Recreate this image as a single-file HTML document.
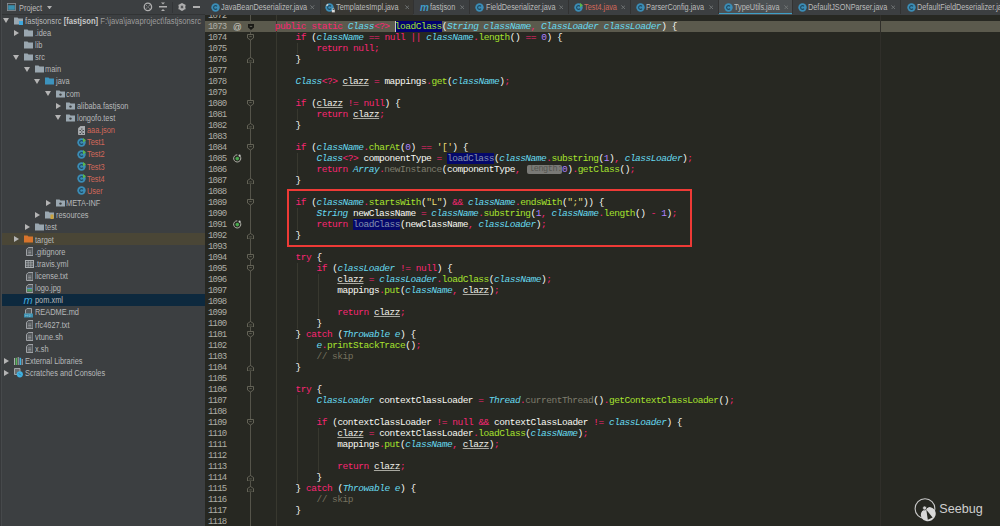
<!DOCTYPE html>
<html><head><meta charset="utf-8">
<style>
*{margin:0;padding:0;box-sizing:content-box}
html,body{width:1000px;height:526px;overflow:hidden;background:#3C3F41}
body{position:relative;font-family:"Liberation Sans",sans-serif}
#panel{position:absolute;left:0;top:0;width:205px;height:526px;background:#3C3F41;overflow:hidden}
#editor{position:absolute;left:205px;top:15px;width:795px;height:511px;background:#272822;overflow:hidden}
#ed{position:absolute;left:-205px;top:-15px;width:1000px;height:526px}
#tabs{position:absolute;left:205px;top:0;width:795px;height:15px;background:#3C3F41;overflow:hidden}
#tb{position:absolute;left:-205px;top:0;width:1000px;height:15px}
.ln{position:absolute;left:208px;height:11px;font:9px/11px "Liberation Mono",monospace;letter-spacing:-0.8px;color:#AEAEA6}
.cl{position:absolute;left:253.8px;height:11px;white-space:pre;font:9.5px/11px "Liberation Mono",monospace;letter-spacing:-0.48px;color:#F8F8F2}
.k,.o{color:#F92672}
.t,.p{color:#66D9EF;font-style:italic}
.m{color:#A6E22E}
.s{color:#7E7C6C}
.w,.b{color:#F8F8F2}
.u{color:#F0F0EA;text-decoration:underline;text-decoration-color:#A8A8A0}
.n{color:#AE81FF}
.str{color:#E6DB74}
.c{color:#75715E}
.hl{color:#A6E22E;background:#02026E}
.hl2{color:#8390AE;background:#05086A}
.hint{display:inline-block;width:35.54px;height:8.6px;line-height:8.6px;background:#6E6E68;color:#9A9A94;border-radius:2px;vertical-align:middle;font-size:8px;overflow:hidden;margin-right:1px}
.tab{position:absolute;top:0.1px;height:15px;font:8.5px/14px "Liberation Sans",sans-serif;transform:scaleX(0.86);transform-origin:0 0;white-space:nowrap}
.tx{position:absolute;top:0;height:15px;font:9px/14px "Liberation Sans",sans-serif;color:#6B6E70}
.tt{position:absolute;height:12px;font:8.5px/12px "Liberation Sans",sans-serif;transform:scaleX(0.87);transform-origin:0 0;white-space:nowrap;color:#B6B8BA}
</style></head><body>
<div id="panel">
<div style="position:absolute;left:0;top:0;width:205px;height:13.5px;background:#3C3F41;border-bottom:1px solid #323435"></div>
<div style="position:absolute;left:0;top:0;width:1px;height:526px;background:#37393B"></div><div style="position:absolute;left:1px;top:0;width:1px;height:526px;background:#46494B"></div>
<svg style="position:absolute;left:7.2px;top:3.3px" width="9" height="8" viewBox="0 0 9 8"><rect x="0.4" y="0.4" width="8.2" height="7.2" fill="none" stroke="#8A9196" stroke-width="0.8"/><rect x="1.2" y="2.2" width="6.6" height="4.6" fill="#3A8FAF"/></svg>
<div style="position:absolute;left:18.5px;top:0.7px;font:8.5px/14px 'Liberation Sans',sans-serif;transform:scaleX(0.87);transform-origin:0 0;color:#BBBBBB">Project</div>
<svg style="position:absolute;left:46.8px;top:5.8px" width="5" height="3.4" viewBox="0 0 5 3.4"><path d="M0 0H5L2.5 3.4Z" fill="#B0B0B0"/></svg>
<svg style="position:absolute;left:142.5px;top:2.2px" width="10" height="10" viewBox="0 0 10 10"><circle cx="4.9" cy="4.9" r="3.7" fill="none" stroke="#AFAFAF" stroke-width="1.3"/><path d="M3.3 3.3L6.5 6.5M6.5 3.3L3.3 6.5" stroke="#AFAFAF" stroke-width="0.9"/><circle cx="4.9" cy="4.9" r="0.9" fill="#3C3F41"/></svg>
<svg style="position:absolute;left:158.5px;top:2px" width="8" height="10" viewBox="0 0 8 10"><path d="M2 0.5H6L4 2.5Z" fill="#AFAFAF"/><rect x="0" y="4" width="8" height="1.5" fill="#AFAFAF"/><path d="M2 9H6L4 7Z" fill="#AFAFAF"/></svg>
<div style="position:absolute;left:171.5px;top:1.5px;width:1px;height:11px;background:#333537"></div>
<svg style="position:absolute;left:177.5px;top:3px" width="8" height="8" viewBox="0 0 8 8"><circle cx="4" cy="4" r="2.6" fill="none" stroke="#AFAFAF" stroke-width="1.6"/><path d="M4 0V8M0.5 2L7.5 6M0.5 6L7.5 2" stroke="#AFAFAF" stroke-width="1.1"/><circle cx="4" cy="4" r="1.1" fill="#3C3F41"/></svg>
<div style="position:absolute;left:193px;top:6.3px;width:7px;height:1.3px;background:#AFAFAF"></div>
<div style="position:absolute;left:2px;top:233.30px;width:203px;height:12.16px;background:#4A4636"></div>
<div style="position:absolute;left:2px;top:294.10px;width:203px;height:12.16px;background:#0D293E"></div>
<svg style="position:absolute;left:3.0px;top:18.0px" width="6" height="5" viewBox="0 0 6 5"><path d="M0 0H6L3 5Z" fill="#B4B4B4"/></svg>
<svg style="position:absolute;left:14.0px;top:16.5px" width="9" height="8" viewBox="0 0 9 8"><path d="M0 0.5H3.5L4.5 1.5H9V7.5H0Z" fill="#9AA7B0"/><rect x="5" y="4" width="4" height="4" fill="#3FA7DC"/></svg>
<div class="tt" style="left:24.6px;top:14.6px;transform:scaleX(0.9)">fastjsonsrc <b style="color:#C8C8C8">[fastjson]</b> <span style="color:#9C9C9C">F:\java\javaproject\fastjsonsrc</span></div>
<svg style="position:absolute;left:14.4px;top:29.7px" width="5" height="6" viewBox="0 0 5 6"><path d="M0 0L5 3L0 6Z" fill="#B4B4B4"/></svg>
<svg style="position:absolute;left:24.4px;top:28.7px" width="9" height="8" viewBox="0 0 9 8"><path d="M0 0.5H3.5L4.5 1.5H9V7.5H0Z" fill="#9AA7B0"/></svg>
<div class="tt" style="left:35.0px;top:26.8px;color:#B6B8BA">.idea</div>
<svg style="position:absolute;left:24.4px;top:40.8px" width="9" height="8" viewBox="0 0 9 8"><path d="M0 0.5H3.5L4.5 1.5H9V7.5H0Z" fill="#9AA7B0"/></svg>
<div class="tt" style="left:35.0px;top:38.9px;color:#B6B8BA">lib</div>
<svg style="position:absolute;left:13.4px;top:54.5px" width="6" height="5" viewBox="0 0 6 5"><path d="M0 0H6L3 5Z" fill="#B4B4B4"/></svg>
<svg style="position:absolute;left:24.4px;top:53.0px" width="9" height="8" viewBox="0 0 9 8"><path d="M0 0.5H3.5L4.5 1.5H9V7.5H0Z" fill="#9AA7B0"/></svg>
<div class="tt" style="left:35.0px;top:51.1px;color:#B6B8BA">src</div>
<svg style="position:absolute;left:23.8px;top:66.6px" width="6" height="5" viewBox="0 0 6 5"><path d="M0 0H6L3 5Z" fill="#B4B4B4"/></svg>
<svg style="position:absolute;left:34.8px;top:65.1px" width="9" height="8" viewBox="0 0 9 8"><path d="M0 0.5H3.5L4.5 1.5H9V7.5H0Z" fill="#9AA7B0"/></svg>
<div class="tt" style="left:45.4px;top:63.2px;color:#B6B8BA">main</div>
<svg style="position:absolute;left:34.2px;top:78.8px" width="6" height="5" viewBox="0 0 6 5"><path d="M0 0H6L3 5Z" fill="#B4B4B4"/></svg>
<svg style="position:absolute;left:45.2px;top:77.3px" width="9" height="8" viewBox="0 0 9 8"><path d="M0 0.5H3.5L4.5 1.5H9V7.5H0Z" fill="#3D93BD"/></svg>
<div class="tt" style="left:55.8px;top:75.4px;color:#B6B8BA">java</div>
<svg style="position:absolute;left:44.6px;top:91.0px" width="6" height="5" viewBox="0 0 6 5"><path d="M0 0H6L3 5Z" fill="#B4B4B4"/></svg>
<svg style="position:absolute;left:55.6px;top:89.5px" width="9" height="8" viewBox="0 0 9 8"><path d="M0 0.5H3.5L4.5 1.5H9V7.5H0Z" fill="#9AA7B0"/><circle cx="4.5" cy="4.6" r="1.2" fill="#3C3F41"/></svg>
<div class="tt" style="left:66.2px;top:87.6px;color:#B6B8BA">com</div>
<svg style="position:absolute;left:56.0px;top:102.6px" width="5" height="6" viewBox="0 0 5 6"><path d="M0 0L5 3L0 6Z" fill="#B4B4B4"/></svg>
<svg style="position:absolute;left:66.0px;top:101.6px" width="9" height="8" viewBox="0 0 9 8"><path d="M0 0.5H3.5L4.5 1.5H9V7.5H0Z" fill="#9AA7B0"/><circle cx="4.5" cy="4.6" r="1.2" fill="#3C3F41"/></svg>
<div class="tt" style="left:76.6px;top:99.7px;color:#B6B8BA">alibaba.fastjson</div>
<svg style="position:absolute;left:55.0px;top:115.3px" width="6" height="5" viewBox="0 0 6 5"><path d="M0 0H6L3 5Z" fill="#B4B4B4"/></svg>
<svg style="position:absolute;left:66.0px;top:113.8px" width="9" height="8" viewBox="0 0 9 8"><path d="M0 0.5H3.5L4.5 1.5H9V7.5H0Z" fill="#9AA7B0"/><circle cx="4.5" cy="4.6" r="1.2" fill="#3C3F41"/></svg>
<div class="tt" style="left:76.6px;top:111.9px;color:#B6B8BA">longofo.test</div>
<svg style="position:absolute;left:77.6px;top:125.5px" width="7.5" height="9" viewBox="0 0 7.5 9"><path d="M2.3 0.5H7V8.5H0.5V2.3Z" fill="#A9ADB0" stroke="#A9ADB0" stroke-width="0.9"/><path d="M1.5 4.5H3M4.5 4.5H6M3 6H4.5M1.5 7.5H3M4.5 7.5H6M3 3H4.5" stroke="#4A4D4F" stroke-width="1.2"/></svg>
<div class="tt" style="left:87.0px;top:124.0px;color:#D1675A">aaa.json</div>
<svg style="position:absolute;left:76.9px;top:137.6px" width="9" height="9" viewBox="0 0 9 9"><circle cx="4.5" cy="4.5" r="4.2" fill="#3B8DB6"/><path d="M6 3.3A1.9 1.9 0 1 0 6 5.7" fill="none" stroke="#1F4A62" stroke-width="1.1"/><path d="M6 0L9 2.2L6 4.4Z" fill="#59B84A"/></svg>
<div class="tt" style="left:87.0px;top:136.2px;color:#D1675A">Test1</div>
<svg style="position:absolute;left:76.9px;top:149.76px" width="9" height="9" viewBox="0 0 9 9"><circle cx="4.5" cy="4.5" r="4.2" fill="#3B8DB6"/><path d="M6 3.3A1.9 1.9 0 1 0 6 5.7" fill="none" stroke="#1F4A62" stroke-width="1.1"/><path d="M6 0L9 2.2L6 4.4Z" fill="#59B84A"/></svg>
<div class="tt" style="left:87.0px;top:148.4px;color:#D1675A">Test2</div>
<svg style="position:absolute;left:76.9px;top:161.92000000000002px" width="9" height="9" viewBox="0 0 9 9"><circle cx="4.5" cy="4.5" r="4.2" fill="#3B8DB6"/><path d="M6 3.3A1.9 1.9 0 1 0 6 5.7" fill="none" stroke="#1F4A62" stroke-width="1.1"/><path d="M6 0L9 2.2L6 4.4Z" fill="#59B84A"/></svg>
<div class="tt" style="left:87.0px;top:160.5px;color:#D1675A">Test3</div>
<svg style="position:absolute;left:76.9px;top:174.08px" width="9" height="9" viewBox="0 0 9 9"><circle cx="4.5" cy="4.5" r="4.2" fill="#3B8DB6"/><path d="M6 3.3A1.9 1.9 0 1 0 6 5.7" fill="none" stroke="#1F4A62" stroke-width="1.1"/><path d="M6 0L9 2.2L6 4.4Z" fill="#59B84A"/></svg>
<div class="tt" style="left:87.0px;top:172.7px;color:#D1675A">Test4</div>
<svg style="position:absolute;left:76.9px;top:186.24px" width="9" height="9" viewBox="0 0 9 9"><circle cx="4.5" cy="4.5" r="4.2" fill="#3B8DB6"/><path d="M6 3.3A1.9 1.9 0 1 0 6 5.7" fill="none" stroke="#1F4A62" stroke-width="1.1"/></svg>
<div class="tt" style="left:87.0px;top:184.8px;color:#D1675A">User</div>
<svg style="position:absolute;left:45.6px;top:199.9px" width="5" height="6" viewBox="0 0 5 6"><path d="M0 0L5 3L0 6Z" fill="#B4B4B4"/></svg>
<svg style="position:absolute;left:55.6px;top:198.9px" width="9" height="8" viewBox="0 0 9 8"><path d="M0 0.5H3.5L4.5 1.5H9V7.5H0Z" fill="#9AA7B0"/><circle cx="4.5" cy="4.6" r="1.2" fill="#3C3F41"/></svg>
<div class="tt" style="left:66.2px;top:197.0px;color:#B6B8BA">META-INF</div>
<svg style="position:absolute;left:35.2px;top:212.1px" width="5" height="6" viewBox="0 0 5 6"><path d="M0 0L5 3L0 6Z" fill="#B4B4B4"/></svg>
<svg style="position:absolute;left:45.2px;top:211.1px" width="9" height="8" viewBox="0 0 9 8"><path d="M0 0.5H3.5L4.5 1.5H9V7.5H0Z" fill="#9AA7B0"/><rect x="5.5" y="3.5" width="3" height="4.5" fill="#C9A23A"/></svg>
<div class="tt" style="left:55.8px;top:209.2px;color:#B6B8BA">resources</div>
<svg style="position:absolute;left:24.8px;top:224.2px" width="5" height="6" viewBox="0 0 5 6"><path d="M0 0L5 3L0 6Z" fill="#B4B4B4"/></svg>
<svg style="position:absolute;left:34.8px;top:223.2px" width="9" height="8" viewBox="0 0 9 8"><path d="M0 0.5H3.5L4.5 1.5H9V7.5H0Z" fill="#9AA7B0"/></svg>
<div class="tt" style="left:45.4px;top:221.3px;color:#B6B8BA">test</div>
<svg style="position:absolute;left:14.4px;top:236.4px" width="5" height="6" viewBox="0 0 5 6"><path d="M0 0L5 3L0 6Z" fill="#B4B4B4"/></svg>
<svg style="position:absolute;left:24.4px;top:235.4px" width="9" height="8" viewBox="0 0 9 8"><path d="M0 0.5H3.5L4.5 1.5H9V7.5H0Z" fill="#D7742C"/></svg>
<div class="tt" style="left:35.0px;top:233.5px;color:#B6B8BA">target</div>
<svg style="position:absolute;left:25.6px;top:247.1px" width="7.5" height="9" viewBox="0 0 7.5 9"><path d="M2.3 0.5H7V8.5H0.5V2.3Z" fill="#55595C" stroke="#A9ADB0" stroke-width="0.9"/><path d="M2.2 4H5.2M2.2 5.5H5.2M2.2 7H5.2" stroke="#A9ADB0" stroke-width="0.6"/></svg>
<div class="tt" style="left:35.0px;top:245.6px;color:#B6B8BA">.gitignore</div>
<svg style="position:absolute;left:24.6px;top:259.9px" width="9" height="8" viewBox="0 0 9 8"><rect x="0.5" y="0.5" width="8" height="7" fill="#55595C" stroke="#A9ADB0"/><path d="M0 2.8H9M0 5.2H9M3.2 0V8M5.8 0V8" stroke="#A9ADB0" stroke-width="0.7"/></svg>
<div class="tt" style="left:35.0px;top:257.8px;color:#B6B8BA">.travis.yml</div>
<svg style="position:absolute;left:25.6px;top:271.5px" width="7.5" height="9" viewBox="0 0 7.5 9"><path d="M2.3 0.5H7V8.5H0.5V2.3Z" fill="#55595C" stroke="#A9ADB0" stroke-width="0.9"/><path d="M2.2 4H5.2M2.2 5.5H5.2M2.2 7H5.2" stroke="#A9ADB0" stroke-width="0.6"/></svg>
<div class="tt" style="left:35.0px;top:270.0px;color:#B6B8BA">license.txt</div>
<svg style="position:absolute;left:25.6px;top:283.6px" width="7.5" height="9" viewBox="0 0 7.5 9"><path d="M2.3 0.5H7V8.5H0.5V2.3Z" fill="#55595C" stroke="#A9ADB0" stroke-width="0.9"/><rect x="1.2" y="4.5" width="4.8" height="3" fill="#4E9A5E"/><rect x="1.2" y="3.8" width="4.8" height="1.2" fill="#5A8FC0"/></svg>
<div class="tt" style="left:35.0px;top:282.1px;color:#B6B8BA">logo.jpg</div>
<div style="position:absolute;left:23.4px;top:294.2px;font:italic 11px/12px 'Liberation Sans',sans-serif;color:#3FA7DC;letter-spacing:-0.5px">m</div>
<div class="tt" style="left:35.0px;top:294.3px;color:#B6B8BA">pom.xml</div>
<svg style="position:absolute;left:24.4px;top:307.5px" width="9" height="10" viewBox="0 0 9 10"><path d="M3 0.5H7.5V6H1.5V2Z" fill="#55595C" stroke="#A9ADB0" stroke-width="0.9"/><rect x="0" y="5.5" width="9" height="4" fill="#3A8FAF"/><path d="M1.5 8.5V6.8L2.5 7.8L3.5 6.8V8.5M5 6.8H6.2L7 7.6L6.2 8.5H5Z" stroke="#8FC5DA" stroke-width="0.5" fill="none"/></svg>
<div class="tt" style="left:35.0px;top:306.4px;color:#B6B8BA">README.md</div>
<svg style="position:absolute;left:25.6px;top:320.1px" width="7.5" height="9" viewBox="0 0 7.5 9"><path d="M2.3 0.5H7V8.5H0.5V2.3Z" fill="#55595C" stroke="#A9ADB0" stroke-width="0.9"/><path d="M2.2 4H5.2M2.2 5.5H5.2M2.2 7H5.2" stroke="#A9ADB0" stroke-width="0.6"/></svg>
<div class="tt" style="left:35.0px;top:318.6px;color:#B6B8BA">rfc4627.txt</div>
<svg style="position:absolute;left:25.6px;top:332.3px" width="7.5" height="9" viewBox="0 0 7.5 9"><path d="M2.3 0.5H7V8.5H0.5V2.3Z" fill="#55595C" stroke="#A9ADB0" stroke-width="0.9"/><path d="M2.2 4H5.2M2.2 5.5H5.2M2.2 7H5.2" stroke="#A9ADB0" stroke-width="0.6"/></svg>
<div class="tt" style="left:35.0px;top:330.8px;color:#B6B8BA">vtune.sh</div>
<svg style="position:absolute;left:25.6px;top:344.4px" width="7.5" height="9" viewBox="0 0 7.5 9"><path d="M2.3 0.5H7V8.5H0.5V2.3Z" fill="#55595C" stroke="#A9ADB0" stroke-width="0.9"/><path d="M2.2 4H5.2M2.2 5.5H5.2M2.2 7H5.2" stroke="#A9ADB0" stroke-width="0.6"/></svg>
<div class="tt" style="left:35.0px;top:342.9px;color:#B6B8BA">x.sh</div>
<svg style="position:absolute;left:4.0px;top:358.0px" width="5" height="6" viewBox="0 0 5 6"><path d="M0 0L5 3L0 6Z" fill="#B4B4B4"/></svg>
<svg style="position:absolute;left:14.0px;top:356.8px" width="9" height="8" viewBox="0 0 9 8"><rect x="0" y="1" width="1" height="7" fill="#A9ADB0"/><rect x="1.6" y="0.8" width="1.5" height="7.2" fill="#5AB45A"/><rect x="3.6" y="0" width="1.5" height="8" fill="#8A8E90"/><rect x="5.6" y="0.8" width="1.5" height="7.2" fill="#3FB0E0"/><rect x="7.7" y="2" width="1" height="6" fill="#A9ADB0"/></svg>
<div class="tt" style="left:24.6px;top:355.1px;color:#B6B8BA">External Libraries</div>
<svg style="position:absolute;left:4.0px;top:370.1px" width="5" height="6" viewBox="0 0 5 6"><path d="M0 0L5 3L0 6Z" fill="#B4B4B4"/></svg>
<svg style="position:absolute;left:14.0px;top:368.4px" width="10" height="10" viewBox="0 0 10 10"><path d="M0.5 0.5H6V6.5H0.5Z" fill="#6A6E70" stroke="#A9ADB0" stroke-width="0.9"/><circle cx="5.8" cy="6.3" r="3.1" fill="#3FB0E0"/><path d="M4.8 5.3L6.8 7.3" stroke="#24648A" stroke-width="0.8"/></svg>
<div class="tt" style="left:24.6px;top:367.2px;color:#B6B8BA">Scratches and Consoles</div>
</div>
<div id="tabs"><div id="tb">
<div style="position:absolute;left:320.5px;top:0;width:92.5px;height:14.5px;background:#393834"></div>
<div style="position:absolute;left:718px;top:0;width:74px;height:14.5px;background:#4C5052"></div>
<div style="position:absolute;left:718px;top:12.6px;width:74px;height:1.9px;background:#3E9FC6"></div>
<svg style="position:absolute;left:210.5px;top:3px" width="9" height="9" viewBox="0 0 9 9"><circle cx="4.5" cy="4.5" r="4.2" fill="#3B8DB6"/><path d="M6 3.3A1.9 1.9 0 1 0 6 5.7" fill="none" stroke="#1F4A62" stroke-width="1.1"/></svg>
<div class="tab" style="left:221px;color:#BBBBBB">JavaBeanDeserializer.java</div>
<svg style="position:absolute;left:310.4px;top:4.8px" width="4.6" height="4.6" viewBox="0 0 4.6 4.6"><path d="M0.3 0.3L4.3 4.3M4.3 0.3L0.3 4.3" stroke="#75787A" stroke-width="0.85"/></svg>
<div style="position:absolute;left:320px;top:0;width:1px;height:14px;background:#323232"></div>
<svg style="position:absolute;left:325px;top:3px" width="9" height="9" viewBox="0 0 9 9"><circle cx="4.5" cy="4.5" r="4.2" fill="#3B8DB6"/><path d="M6 3.3A1.9 1.9 0 1 0 6 5.7" fill="none" stroke="#1F4A62" stroke-width="1.1"/></svg>
<svg style="position:absolute;left:324.5px;top:2.5px" width="11" height="10" viewBox="0 0 11 10"><path d="M1 2.2L2.6 0.8L3.6 1.8L2 3.3Z" fill="#D0D0D0"/><rect x="6.8" y="7" width="3" height="2.4" fill="#D8D8D8"/><path d="M7.4 7V6.2A0.9 0.9 0 0 1 9.2 6.2V7" fill="none" stroke="#D8D8D8" stroke-width="0.6"/></svg>
<div class="tab" style="left:336px;color:#BBBBBB">TemplatesImpl.java</div>
<svg style="position:absolute;left:404.7px;top:4.8px" width="4.6" height="4.6" viewBox="0 0 4.6 4.6"><path d="M0.3 0.3L4.3 4.3M4.3 0.3L0.3 4.3" stroke="#75787A" stroke-width="0.85"/></svg>
<div style="position:absolute;left:413px;top:0;width:1px;height:14px;background:#323232"></div>
<div style="position:absolute;left:420px;top:0px;font:italic bold 10px/15px 'Liberation Sans',sans-serif;color:#3F9CC9">m</div>
<div class="tab" style="left:430px;color:#BBBBBB">fastjson</div>
<svg style="position:absolute;left:459.7px;top:4.8px" width="4.6" height="4.6" viewBox="0 0 4.6 4.6"><path d="M0.3 0.3L4.3 4.3M4.3 0.3L0.3 4.3" stroke="#75787A" stroke-width="0.85"/></svg>
<div style="position:absolute;left:469px;top:0;width:1px;height:14px;background:#323232"></div>
<svg style="position:absolute;left:475px;top:3px" width="9" height="9" viewBox="0 0 9 9"><circle cx="4.5" cy="4.5" r="4.2" fill="#3B8DB6"/><path d="M6 3.3A1.9 1.9 0 1 0 6 5.7" fill="none" stroke="#1F4A62" stroke-width="1.1"/></svg>
<div class="tab" style="left:486px;color:#BBBBBB">FieldDeserializer.java</div>
<svg style="position:absolute;left:558.7px;top:4.8px" width="4.6" height="4.6" viewBox="0 0 4.6 4.6"><path d="M0.3 0.3L4.3 4.3M4.3 0.3L0.3 4.3" stroke="#75787A" stroke-width="0.85"/></svg>
<div style="position:absolute;left:568px;top:0;width:1px;height:14px;background:#323232"></div>
<svg style="position:absolute;left:574px;top:3px" width="9" height="9" viewBox="0 0 9 9"><circle cx="4.5" cy="4.5" r="4.2" fill="#3B8DB6"/><path d="M6 3.3A1.9 1.9 0 1 0 6 5.7" fill="none" stroke="#1F4A62" stroke-width="1.1"/><path d="M6 0L9 2.2L6 4.4Z" fill="#59B84A"/></svg>
<div class="tab" style="left:584px;color:#D1675A">Test4.java</div>
<svg style="position:absolute;left:620.7px;top:4.8px" width="4.6" height="4.6" viewBox="0 0 4.6 4.6"><path d="M0.3 0.3L4.3 4.3M4.3 0.3L0.3 4.3" stroke="#75787A" stroke-width="0.85"/></svg>
<div style="position:absolute;left:630px;top:0;width:1px;height:14px;background:#323232"></div>
<svg style="position:absolute;left:636px;top:3px" width="9" height="9" viewBox="0 0 9 9"><circle cx="4.5" cy="4.5" r="4.2" fill="#3B8DB6"/><path d="M6 3.3A1.9 1.9 0 1 0 6 5.7" fill="none" stroke="#1F4A62" stroke-width="1.1"/></svg>
<div class="tab" style="left:646px;color:#BBBBBB">ParserConfig.java</div>
<svg style="position:absolute;left:708.7px;top:4.8px" width="4.6" height="4.6" viewBox="0 0 4.6 4.6"><path d="M0.3 0.3L4.3 4.3M4.3 0.3L0.3 4.3" stroke="#75787A" stroke-width="0.85"/></svg>
<div style="position:absolute;left:717.6px;top:0;width:1px;height:14px;background:#323232"></div>
<svg style="position:absolute;left:724px;top:3px" width="9" height="9" viewBox="0 0 9 9"><circle cx="4.5" cy="4.5" r="4.2" fill="#3B8DB6"/><path d="M6 3.3A1.9 1.9 0 1 0 6 5.7" fill="none" stroke="#1F4A62" stroke-width="1.1"/></svg>
<div class="tab" style="left:734px;color:#BBBBBB">TypeUtils.java</div>
<svg style="position:absolute;left:783.7px;top:4.8px" width="4.6" height="4.6" viewBox="0 0 4.6 4.6"><path d="M0.3 0.3L4.3 4.3M4.3 0.3L0.3 4.3" stroke="#75787A" stroke-width="0.85"/></svg>
<div style="position:absolute;left:792px;top:0;width:1px;height:14px;background:#323232"></div>
<svg style="position:absolute;left:798px;top:3px" width="9" height="9" viewBox="0 0 9 9"><circle cx="4.5" cy="4.5" r="4.2" fill="#3B8DB6"/><path d="M6 3.3A1.9 1.9 0 1 0 6 5.7" fill="none" stroke="#1F4A62" stroke-width="1.1"/></svg>
<div class="tab" style="left:808px;color:#BBBBBB">DefaultJSONParser.java</div>
<svg style="position:absolute;left:890.7px;top:4.8px" width="4.6" height="4.6" viewBox="0 0 4.6 4.6"><path d="M0.3 0.3L4.3 4.3M4.3 0.3L0.3 4.3" stroke="#75787A" stroke-width="0.85"/></svg>
<div style="position:absolute;left:900px;top:0;width:1px;height:14px;background:#323232"></div>
<svg style="position:absolute;left:906.6px;top:3px" width="9" height="9" viewBox="0 0 9 9"><circle cx="4.5" cy="4.5" r="4.2" fill="#3B8DB6"/><path d="M6 3.3A1.9 1.9 0 1 0 6 5.7" fill="none" stroke="#1F4A62" stroke-width="1.1"/></svg>
<div class="tab" style="left:917px;color:#BBBBBB">DefaultFieldDeserializer.java</div>
</div></div>
<div id="editor"><div id="ed">
<div style="position:absolute;left:205px;top:21.0px;width:795px;height:11.0px;background:#5B5A4D"></div>
<div style="position:absolute;left:276.2px;top:10.0px;width:1px;height:517.0px;background:#38382F"></div>
<div style="position:absolute;left:297.1px;top:43.0px;width:1px;height:11.0px;background:#38382F"></div>
<div style="position:absolute;left:297.1px;top:109.0px;width:1px;height:11.0px;background:#38382F"></div>
<div style="position:absolute;left:297.1px;top:153.0px;width:1px;height:22.0px;background:#38382F"></div>
<div style="position:absolute;left:297.1px;top:208.0px;width:1px;height:22.0px;background:#38382F"></div>
<div style="position:absolute;left:297.1px;top:263.0px;width:1px;height:66.0px;background:#38382F"></div>
<div style="position:absolute;left:317.9px;top:274.0px;width:1px;height:44.0px;background:#38382F"></div>
<div style="position:absolute;left:297.1px;top:340.0px;width:1px;height:22.0px;background:#38382F"></div>
<div style="position:absolute;left:297.1px;top:395.0px;width:1px;height:88.0px;background:#38382F"></div>
<div style="position:absolute;left:317.9px;top:428.0px;width:1px;height:44.0px;background:#38382F"></div>
<div style="position:absolute;left:880px;top:15px;width:1px;height:511px;background:#302F2A"></div>
<div style="position:absolute;left:250px;top:15px;width:1px;height:511px;background:#55544A"></div>
<div class="ln" style="top:11.0px">1072</div>
<div class="ln" style="top:22.0px">1073</div>
<div class="cl" style="top:20.7px">    <span class="k">public</span><span class="k"> static </span><span class="t">Class</span><span class="o">&lt;?&gt;</span><span class="w"> </span><span class="hl">loadClass</span><span class="b">(</span><span class="t">String</span><span class="w"> </span><span class="p">className</span><span class="o">,</span><span class="w"> </span><span class="t">ClassLoader</span><span class="w"> </span><span class="p">classLoader</span><span class="b">)</span><span class="w"> </span><span class="b">{</span></div>
<svg style="position:absolute;left:247.5px;top:23.6px" width="6" height="6" viewBox="0 0 6 6"><path d="M0 0H6V3.6L3 6L0 3.6Z" fill="#1A1A16"/><path d="M1.8 2.4H4.2" stroke="#77766A" stroke-width="0.8"/></svg>
<div class="ln" style="top:33.0px">1074</div>
<div class="cl" style="top:31.7px">        <span class="k">if</span><span class="w"> </span><span class="b">(</span><span class="p">className</span><span class="w"> </span><span class="o">==</span><span class="w"> </span><span class="k">null</span><span class="w"> </span><span class="o">||</span><span class="w"> </span><span class="p">className</span><span class="o">.</span><span class="m">length</span><span class="b">()</span><span class="w"> </span><span class="o">==</span><span class="w"> </span><span class="n">0</span><span class="b">)</span><span class="w"> </span><span class="b">{</span></div>
<svg style="position:absolute;left:247px;top:34.2px" width="7" height="6.5" viewBox="0 0 7 6.5"><path d="M0.5 0.5H6.5V4L3.5 6L0.5 4Z" fill="#272822" stroke="#6A695C" stroke-width="0.9"/><path d="M2.3 2.6H4.7" stroke="#6A695C" stroke-width="0.8"/></svg>
<div class="ln" style="top:44.0px">1075</div>
<div class="cl" style="top:42.7px">            <span class="k">return</span><span class="w"> </span><span class="k">null</span><span class="o">;</span></div>
<div class="ln" style="top:55.0px">1076</div>
<div class="cl" style="top:53.7px">        <span class="b">}</span></div>
<svg style="position:absolute;left:247px;top:56.5px" width="7" height="6.5" viewBox="0 0 7 6.5"><path d="M0.5 6H6.5V2.5L3.5 0.5L0.5 2.5Z" fill="#272822" stroke="#6A695C" stroke-width="0.9"/><path d="M2.3 3.9H4.7" stroke="#6A695C" stroke-width="0.8"/></svg>
<div class="ln" style="top:66.0px">1077</div>
<div class="ln" style="top:77.0px">1078</div>
<div class="cl" style="top:75.7px">        <span class="t">Class</span><span class="o">&lt;?&gt;</span><span class="w"> </span><span class="u">clazz</span><span class="w"> </span><span class="o">=</span><span class="w"> mappings</span><span class="o">.</span><span class="m">get</span><span class="b">(</span><span class="p">className</span><span class="b">)</span><span class="o">;</span></div>
<div class="ln" style="top:88.0px">1079</div>
<div class="ln" style="top:99.0px">1080</div>
<div class="cl" style="top:97.7px">        <span class="k">if</span><span class="w"> </span><span class="b">(</span><span class="u">clazz</span><span class="w"> </span><span class="o">!=</span><span class="w"> </span><span class="k">null</span><span class="b">)</span><span class="w"> </span><span class="b">{</span></div>
<svg style="position:absolute;left:247px;top:100.2px" width="7" height="6.5" viewBox="0 0 7 6.5"><path d="M0.5 0.5H6.5V4L3.5 6L0.5 4Z" fill="#272822" stroke="#6A695C" stroke-width="0.9"/><path d="M2.3 2.6H4.7" stroke="#6A695C" stroke-width="0.8"/></svg>
<div class="ln" style="top:110.0px">1081</div>
<div class="cl" style="top:108.7px">            <span class="k">return</span><span class="w"> </span><span class="u">clazz</span><span class="o">;</span></div>
<div class="ln" style="top:121.0px">1082</div>
<div class="cl" style="top:119.7px">        <span class="b">}</span></div>
<svg style="position:absolute;left:247px;top:122.5px" width="7" height="6.5" viewBox="0 0 7 6.5"><path d="M0.5 6H6.5V2.5L3.5 0.5L0.5 2.5Z" fill="#272822" stroke="#6A695C" stroke-width="0.9"/><path d="M2.3 3.9H4.7" stroke="#6A695C" stroke-width="0.8"/></svg>
<div class="ln" style="top:132.0px">1083</div>
<div class="ln" style="top:143.0px">1084</div>
<div class="cl" style="top:141.7px">        <span class="k">if</span><span class="w"> </span><span class="b">(</span><span class="p">className</span><span class="o">.</span><span class="m">charAt</span><span class="b">(</span><span class="n">0</span><span class="b">)</span><span class="w"> </span><span class="o">==</span><span class="w"> </span><span class="str">&#x27;[&#x27;</span><span class="b">)</span><span class="w"> </span><span class="b">{</span></div>
<svg style="position:absolute;left:247px;top:144.2px" width="7" height="6.5" viewBox="0 0 7 6.5"><path d="M0.5 0.5H6.5V4L3.5 6L0.5 4Z" fill="#272822" stroke="#6A695C" stroke-width="0.9"/><path d="M2.3 2.6H4.7" stroke="#6A695C" stroke-width="0.8"/></svg>
<div class="ln" style="top:154.0px">1085</div>
<div class="cl" style="top:152.7px">            <span class="t">Class</span><span class="o">&lt;?&gt;</span><span class="w"> componentType </span><span class="o">=</span><span class="w"> </span><span class="hl2">loadClass</span><span class="b">(</span><span class="p">className</span><span class="o">.</span><span class="m">substring</span><span class="b">(</span><span class="n">1</span><span class="b">)</span><span class="o">,</span><span class="w"> </span><span class="p">classLoader</span><span class="b">)</span><span class="o">;</span></div>
<div class="ln" style="top:165.0px">1086</div>
<div class="cl" style="top:163.7px">            <span class="k">return</span><span class="w"> </span><span class="t">Array</span><span class="o">.</span><span class="s">newInstance</span><span class="b">(</span><span class="w">componentType</span><span class="o">,</span><span class="w"> </span>       <span class="n">0</span><span class="b">)</span><span class="o">.</span><span class="m">getClass</span><span class="b">()</span><span class="o">;</span></div>
<div class="ln" style="top:176.0px">1087</div>
<div class="cl" style="top:174.7px">        <span class="b">}</span></div>
<svg style="position:absolute;left:247px;top:177.5px" width="7" height="6.5" viewBox="0 0 7 6.5"><path d="M0.5 6H6.5V2.5L3.5 0.5L0.5 2.5Z" fill="#272822" stroke="#6A695C" stroke-width="0.9"/><path d="M2.3 3.9H4.7" stroke="#6A695C" stroke-width="0.8"/></svg>
<div class="ln" style="top:187.0px">1088</div>
<div class="ln" style="top:198.0px">1089</div>
<div class="cl" style="top:196.7px">        <span class="k">if</span><span class="w"> </span><span class="b">(</span><span class="p">className</span><span class="o">.</span><span class="m">startsWith</span><span class="b">(</span><span class="str">&quot;L&quot;</span><span class="b">)</span><span class="w"> </span><span class="o">&amp;&amp;</span><span class="w"> </span><span class="p">className</span><span class="o">.</span><span class="m">endsWith</span><span class="b">(</span><span class="str">&quot;;&quot;</span><span class="b">))</span><span class="w"> </span><span class="b">{</span></div>
<svg style="position:absolute;left:247px;top:199.2px" width="7" height="6.5" viewBox="0 0 7 6.5"><path d="M0.5 0.5H6.5V4L3.5 6L0.5 4Z" fill="#272822" stroke="#6A695C" stroke-width="0.9"/><path d="M2.3 2.6H4.7" stroke="#6A695C" stroke-width="0.8"/></svg>
<div class="ln" style="top:209.0px">1090</div>
<div class="cl" style="top:207.7px">            <span class="t">String</span><span class="w"> newClassName </span><span class="o">=</span><span class="w"> </span><span class="p">className</span><span class="o">.</span><span class="m">substring</span><span class="b">(</span><span class="n">1</span><span class="o">,</span><span class="w"> </span><span class="p">className</span><span class="o">.</span><span class="m">length</span><span class="b">()</span><span class="w"> </span><span class="o">-</span><span class="w"> </span><span class="n">1</span><span class="b">)</span><span class="o">;</span></div>
<div class="ln" style="top:220.0px">1091</div>
<div class="cl" style="top:218.7px">            <span class="k">return</span><span class="w"> </span><span class="hl2">loadClass</span><span class="b">(</span><span class="w">newClassName</span><span class="o">,</span><span class="w"> </span><span class="p">classLoader</span><span class="b">)</span><span class="o">;</span></div>
<div class="ln" style="top:231.0px">1092</div>
<div class="cl" style="top:229.7px">        <span class="b">}</span></div>
<svg style="position:absolute;left:247px;top:232.5px" width="7" height="6.5" viewBox="0 0 7 6.5"><path d="M0.5 6H6.5V2.5L3.5 0.5L0.5 2.5Z" fill="#272822" stroke="#6A695C" stroke-width="0.9"/><path d="M2.3 3.9H4.7" stroke="#6A695C" stroke-width="0.8"/></svg>
<div class="ln" style="top:242.0px">1093</div>
<div class="ln" style="top:253.0px">1094</div>
<div class="cl" style="top:251.7px">        <span class="k">try</span><span class="w"> </span><span class="b">{</span></div>
<svg style="position:absolute;left:247px;top:254.2px" width="7" height="6.5" viewBox="0 0 7 6.5"><path d="M0.5 0.5H6.5V4L3.5 6L0.5 4Z" fill="#272822" stroke="#6A695C" stroke-width="0.9"/><path d="M2.3 2.6H4.7" stroke="#6A695C" stroke-width="0.8"/></svg>
<div class="ln" style="top:264.0px">1095</div>
<div class="cl" style="top:262.7px">            <span class="k">if</span><span class="w"> </span><span class="b">(</span><span class="p">classLoader</span><span class="w"> </span><span class="o">!=</span><span class="w"> </span><span class="k">null</span><span class="b">)</span><span class="w"> </span><span class="b">{</span></div>
<svg style="position:absolute;left:247px;top:265.2px" width="7" height="6.5" viewBox="0 0 7 6.5"><path d="M0.5 0.5H6.5V4L3.5 6L0.5 4Z" fill="#272822" stroke="#6A695C" stroke-width="0.9"/><path d="M2.3 2.6H4.7" stroke="#6A695C" stroke-width="0.8"/></svg>
<div class="ln" style="top:275.0px">1096</div>
<div class="cl" style="top:273.7px">                <span class="u">clazz</span><span class="w"> </span><span class="o">=</span><span class="w"> </span><span class="p">classLoader</span><span class="o">.</span><span class="m">loadClass</span><span class="b">(</span><span class="p">className</span><span class="b">)</span><span class="o">;</span></div>
<div class="ln" style="top:286.0px">1097</div>
<div class="cl" style="top:284.7px">                <span class="w">mappings</span><span class="o">.</span><span class="m">put</span><span class="b">(</span><span class="p">className</span><span class="o">,</span><span class="w"> </span><span class="u">clazz</span><span class="b">)</span><span class="o">;</span></div>
<div class="ln" style="top:297.0px">1098</div>
<div class="ln" style="top:308.0px">1099</div>
<div class="cl" style="top:306.7px">                <span class="k">return</span><span class="w"> </span><span class="u">clazz</span><span class="o">;</span></div>
<div class="ln" style="top:319.0px">1100</div>
<div class="cl" style="top:317.7px">            <span class="b">}</span></div>
<svg style="position:absolute;left:247px;top:320.5px" width="7" height="6.5" viewBox="0 0 7 6.5"><path d="M0.5 6H6.5V2.5L3.5 0.5L0.5 2.5Z" fill="#272822" stroke="#6A695C" stroke-width="0.9"/><path d="M2.3 3.9H4.7" stroke="#6A695C" stroke-width="0.8"/></svg>
<div class="ln" style="top:330.0px">1101</div>
<div class="cl" style="top:328.7px">        <span class="b">}</span><span class="w"> </span><span class="k">catch</span><span class="w"> </span><span class="b">(</span><span class="t">Throwable</span><span class="w"> </span><span class="p">e</span><span class="b">)</span><span class="w"> </span><span class="b">{</span></div>
<svg style="position:absolute;left:247px;top:331.2px" width="7" height="6.5" viewBox="0 0 7 6.5"><path d="M0.5 0.5H6.5V4L3.5 6L0.5 4Z" fill="#272822" stroke="#6A695C" stroke-width="0.9"/><path d="M2.3 2.6H4.7" stroke="#6A695C" stroke-width="0.8"/></svg>
<div class="ln" style="top:341.0px">1102</div>
<div class="cl" style="top:339.7px">            <span class="p">e</span><span class="o">.</span><span class="m">printStackTrace</span><span class="b">()</span><span class="o">;</span></div>
<div class="ln" style="top:352.0px">1103</div>
<div class="cl" style="top:350.7px">            <span class="c">// skip</span></div>
<div class="ln" style="top:363.0px">1104</div>
<div class="cl" style="top:361.7px">        <span class="b">}</span></div>
<svg style="position:absolute;left:247px;top:364.5px" width="7" height="6.5" viewBox="0 0 7 6.5"><path d="M0.5 6H6.5V2.5L3.5 0.5L0.5 2.5Z" fill="#272822" stroke="#6A695C" stroke-width="0.9"/><path d="M2.3 3.9H4.7" stroke="#6A695C" stroke-width="0.8"/></svg>
<div class="ln" style="top:374.0px">1105</div>
<div class="ln" style="top:385.0px">1106</div>
<div class="cl" style="top:383.7px">        <span class="k">try</span><span class="w"> </span><span class="b">{</span></div>
<svg style="position:absolute;left:247px;top:386.2px" width="7" height="6.5" viewBox="0 0 7 6.5"><path d="M0.5 0.5H6.5V4L3.5 6L0.5 4Z" fill="#272822" stroke="#6A695C" stroke-width="0.9"/><path d="M2.3 2.6H4.7" stroke="#6A695C" stroke-width="0.8"/></svg>
<div class="ln" style="top:396.0px">1107</div>
<div class="cl" style="top:394.7px">            <span class="t">ClassLoader</span><span class="w"> contextClassLoader </span><span class="o">=</span><span class="w"> </span><span class="t">Thread</span><span class="o">.</span><span class="s">currentThread</span><span class="b">()</span><span class="o">.</span><span class="m">getContextClassLoader</span><span class="b">()</span><span class="o">;</span></div>
<div class="ln" style="top:407.0px">1108</div>
<div class="ln" style="top:418.0px">1109</div>
<div class="cl" style="top:416.7px">            <span class="k">if</span><span class="w"> </span><span class="b">(</span><span class="w">contextClassLoader </span><span class="o">!=</span><span class="w"> </span><span class="k">null</span><span class="w"> </span><span class="o">&amp;&amp;</span><span class="w"> contextClassLoader </span><span class="o">!=</span><span class="w"> </span><span class="p">classLoader</span><span class="b">)</span><span class="w"> </span><span class="b">{</span></div>
<svg style="position:absolute;left:247px;top:419.2px" width="7" height="6.5" viewBox="0 0 7 6.5"><path d="M0.5 0.5H6.5V4L3.5 6L0.5 4Z" fill="#272822" stroke="#6A695C" stroke-width="0.9"/><path d="M2.3 2.6H4.7" stroke="#6A695C" stroke-width="0.8"/></svg>
<div class="ln" style="top:429.0px">1110</div>
<div class="cl" style="top:427.7px">                <span class="u">clazz</span><span class="w"> </span><span class="o">=</span><span class="w"> contextClassLoader</span><span class="o">.</span><span class="m">loadClass</span><span class="b">(</span><span class="p">className</span><span class="b">)</span><span class="o">;</span></div>
<div class="ln" style="top:440.0px">1111</div>
<div class="cl" style="top:438.7px">                <span class="w">mappings</span><span class="o">.</span><span class="m">put</span><span class="b">(</span><span class="p">className</span><span class="o">,</span><span class="w"> </span><span class="u">clazz</span><span class="b">)</span><span class="o">;</span></div>
<div class="ln" style="top:451.0px">1112</div>
<div class="ln" style="top:462.0px">1113</div>
<div class="cl" style="top:460.7px">                <span class="k">return</span><span class="w"> </span><span class="u">clazz</span><span class="o">;</span></div>
<div class="ln" style="top:473.0px">1114</div>
<div class="cl" style="top:471.7px">            <span class="b">}</span></div>
<svg style="position:absolute;left:247px;top:474.5px" width="7" height="6.5" viewBox="0 0 7 6.5"><path d="M0.5 6H6.5V2.5L3.5 0.5L0.5 2.5Z" fill="#272822" stroke="#6A695C" stroke-width="0.9"/><path d="M2.3 3.9H4.7" stroke="#6A695C" stroke-width="0.8"/></svg>
<div class="ln" style="top:484.0px">1115</div>
<div class="cl" style="top:482.7px">        <span class="b">}</span><span class="w"> </span><span class="k">catch</span><span class="w"> </span><span class="b">(</span><span class="t">Throwable</span><span class="w"> </span><span class="p">e</span><span class="b">)</span><span class="w"> </span><span class="b">{</span></div>
<svg style="position:absolute;left:247px;top:485.5px" width="7" height="6.5" viewBox="0 0 7 6.5"><path d="M0.5 6H6.5V2.5L3.5 0.5L0.5 2.5Z" fill="#272822" stroke="#6A695C" stroke-width="0.9"/><path d="M2.3 3.9H4.7" stroke="#6A695C" stroke-width="0.8"/></svg>
<div class="ln" style="top:495.0px">1116</div>
<div class="cl" style="top:493.7px">            <span class="c">// skip</span></div>
<div class="ln" style="top:506.0px">1117</div>
<div class="cl" style="top:504.7px">        <span class="b">}</span></div>
<div class="ln" style="top:517.0px">1118</div>
<div style="position:absolute;left:233px;top:21.5px;width:8.6px;height:11px;font:8.6px/11px 'Liberation Sans',sans-serif;color:#D0D0C8;text-align:center">@</div>
<svg style="position:absolute;left:232px;top:153.0px" width="11" height="11" viewBox="0 0 11 11"><path d="M7.9 3.0A3.6 3.6 0 1 1 5.3 1.8" fill="none" stroke="#B0B0A8" stroke-width="1"/><circle cx="5.3" cy="5.6" r="1.8" fill="#49A84E"/><circle cx="7.6" cy="2.6" r="1.1" fill="#C8C8C8"/></svg>
<svg style="position:absolute;left:232px;top:219.0px" width="11" height="11" viewBox="0 0 11 11"><path d="M7.9 3.0A3.6 3.6 0 1 1 5.3 1.8" fill="none" stroke="#B0B0A8" stroke-width="1"/><circle cx="5.3" cy="5.6" r="1.8" fill="#49A84E"/><circle cx="7.6" cy="2.6" r="1.1" fill="#C8C8C8"/></svg>
<div style="position:absolute;left:286.6px;top:189.3px;width:401.3px;height:53.9px;border:2px solid #EE3A36"></div>
<div style="position:absolute;left:527px;top:165.2px;width:34.8px;height:8.6px;background:#7A7A76;border-radius:2px;font:8.5px/8.6px 'Liberation Mono',monospace;letter-spacing:-0.4px;color:#55554F;text-indent:2px;overflow:hidden;white-space:pre">length:</div>
<div style="position:absolute;left:395px;top:21px;width:1px;height:11px;background:#C8C8C8"></div>
<svg style="position:absolute;left:910px;top:494px" width="30" height="30" viewBox="910 494 30 30"><circle cx="925" cy="508.7" r="9.9" fill="none" stroke="#C8C8C8" stroke-width="1.1"/><ellipse cx="928.3" cy="514.2" rx="7.6" ry="6.9" transform="rotate(-30 928.3 514.2)" fill="#D8D8D8"/><path d="M926.3 509.8L927.8 519.8L932.6 517.6Z" fill="#272822"/><path d="M919.5 512L929.5 506.3" stroke="#272822" stroke-width="1"/><circle cx="924.6" cy="508" r="2" fill="#D0D0D0" stroke="#272822" stroke-width="0.7"/></svg>
<div style="position:absolute;left:939.3px;top:501.5px;font:12.6px/14px 'Liberation Sans',sans-serif;color:#CFCFCF;white-space:nowrap">Seebug</div>
</div></div>
</body></html>
